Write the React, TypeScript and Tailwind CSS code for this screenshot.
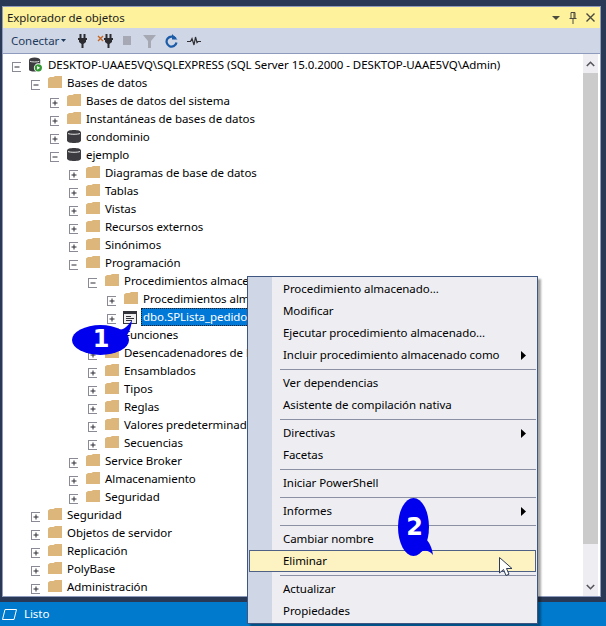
type Kind = "server" | "folder" | "db" | "proc";

type TreeNode = {
  label: string;
  depth: number;
  open?: boolean;
  kind?: Kind;
  selected?: boolean;
};

// labels that run under the context menu stop where the menu starts
const TREE: TreeNode[] = [
  { label: "DESKTOP-UAAE5VQ\\SQLEXPRESS (SQL Server 15.0.2000 - DESKTOP-UAAE5VQ\\Admin)", depth: 0, open: true, kind: "server" },
  { label: "Bases de datos", depth: 1, open: true },
  { label: "Bases de datos del sistema", depth: 2 },
  { label: "Instantáneas de bases de datos", depth: 2 },
  { label: "condominio", depth: 2, kind: "db" },
  { label: "ejemplo", depth: 2, open: true, kind: "db" },
  { label: "Diagramas de base de datos", depth: 3 },
  { label: "Tablas", depth: 3 },
  { label: "Vistas", depth: 3 },
  { label: "Recursos externos", depth: 3 },
  { label: "Sinónimos", depth: 3 },
  { label: "Programación", depth: 3, open: true },
  { label: "Procedimientos almace", depth: 4, open: true },
  { label: "Procedimientos alm", depth: 5 },
  { label: "dbo.SPLista_pedido", depth: 5, kind: "proc", selected: true },
  { label: "Funciones", depth: 4 },
  { label: "Desencadenadores de b", depth: 4 },
  { label: "Ensamblados", depth: 4 },
  { label: "Tipos", depth: 4 },
  { label: "Reglas", depth: 4 },
  { label: "Valores predeterminado", depth: 4 },
  { label: "Secuencias", depth: 4 },
  { label: "Service Broker", depth: 3 },
  { label: "Almacenamiento", depth: 3 },
  { label: "Seguridad", depth: 3 },
  { label: "Seguridad", depth: 1 },
  { label: "Objetos de servidor", depth: 1 },
  { label: "Replicación", depth: 1 },
  { label: "PolyBase", depth: 1 },
  { label: "Administración", depth: 1 },
];

const MENU: { label?: string; sub?: boolean; active?: boolean }[] = [
  { label: "Procedimiento almacenado..." },
  { label: "Modificar" },
  { label: "Ejecutar procedimiento almacenado..." },
  { label: "Incluir procedimiento almacenado como", sub: true },
  {},
  { label: "Ver dependencias" },
  { label: "Asistente de compilación nativa" },
  {},
  { label: "Directivas", sub: true },
  { label: "Facetas" },
  {},
  { label: "Iniciar PowerShell" },
  {},
  { label: "Informes", sub: true },
  {},
  { label: "Cambiar nombre" },
  { label: "Eliminar", active: true },
  {},
  { label: "Actualizar" },
  { label: "Propiedades" },
];

function Expander({ open }: { open?: boolean }) {
  return (
    <svg width="10" height="10" viewBox="0 0 10 10" className="mt-[5px] shrink-0">
      <rect x="1.500" y="0.5" width="9" height="9" fill="#fff" stroke="#8a8a94" />
      <path d={open ? "M3.500 5h5" : "M3.500 5h5M6 2.500v5"} stroke="#2c2c34" fill="none" />
    </svg>
  );
}

function Folder() {
  return (
    <svg width="14" height="12" viewBox="0 0 14 12">
      <path d="M0 2.500 2 1h3.500L7 0h7v12H0z" fill="#dcb67a" />
    </svg>
  );
}

function Cylinder() {
  return (
    <svg width="14" height="13" viewBox="0 0 14 13" className="mt-px">
      <path d="M0 2.500C0 .8 3.200 0 7 0s7 .8 7 2.500v8c0 1.700-3.200 2.500-7 2.500s-7-.8-7-2.500z" fill="#3b3b40" />
      <path d="M1 3.500c1.800 1 10.200 1 12 0" stroke="#e8e8e8" fill="none" />
    </svg>
  );
}

function ServerIcon() {
  return (
    <svg width="15" height="16" viewBox="0 0 15 16" className="mt-px">
      <path d="M0 3C0 1 2.500 0 6 0s6 1 6 3v9.500C12 14.500 9.500 15 6 15s-6-.5-6-2.500z" fill="#3b3b40" />
      <path d="M1 4c1.500 1 8.500 1 10 0" stroke="#e8e8e8" fill="none" />
      <circle cx="10" cy="11" r="4.800" fill="#fff" />
      <circle cx="10" cy="11" r="3.900" fill="#339933" />
      <path d="M8.700 9v4l3.200-2z" fill="#fff" />
    </svg>
  );
}

function ProcIcon() {
  return (
    <svg width="14" height="13" viewBox="0 0 14 13" className="mt-[2px] -ml-px">
      <rect x="0.5" y="0.5" width="13" height="12" fill="#eeeeee" stroke="#33333a" />
      <path d="M0 1h14v2H0z" fill="#33333a" />
      <path d="M3 5.500h5M3 7.500h8M3 9.500h6" stroke="#33333a" fill="none" />
    </svg>
  );
}

function TreeRow({ node }: { node: TreeNode }) {
  const kind = node.kind ?? "folder";
  return (
    <div className="flex h-[18px] items-center whitespace-nowrap" style={{ paddingLeft: 8 + node.depth * 19 }}>
      <Expander open={node.open} />
      <div className="ml-[8px] flex w-[14px] shrink-0 items-center">
        {kind === "folder" && <Folder />}
        {kind === "db" && <Cylinder />}
        {kind === "server" && <ServerIcon />}
        {kind === "proc" && <ProcIcon />}
      </div>
      {node.selected ? (
        <span className="mt-[2px] ml-[3px] h-[18px] w-[108px] border border-dotted border-[#1c1c1c] bg-[#0078d7] px-[1px] leading-[16px] text-white">
          {node.label}
        </span>
      ) : (
        <span className="mt-[2px] ml-[5px]">{node.label}</span>
      )}
    </div>
  );
}

function PlugIcon() {
  return (
    <svg width="9" height="14" viewBox="0 0 9 14">
      <path d="M1.500 0h2v4h-2zM5.500 0h2v4h-2zM0 4h9v2H8v2L5.500 10v4h-2v-4L1 8V6H0z" fill="#2b2b30" />
    </svg>
  );
}

function ToolbarIcons() {
  return (
    <div className="flex items-center">
      <div className="ml-[12px]">
        <PlugIcon />
      </div>
      <svg width="7" height="7" viewBox="0 0 7 7" className="mb-[5px] ml-[10px]">
        <path d="M1 1l5 5M6 1 1 6" stroke="#c8641e" strokeWidth="1.300" fill="none" />
      </svg>
      <div>
        <PlugIcon />
      </div>
      <div className="ml-[10px] h-[9px] w-[8px] bg-[#a6a9b3]" />
      <svg width="13" height="13" viewBox="0 0 13 13" className="mt-[2px] ml-[12px]">
        <path d="M0 0h13L8 6v7H5V6z" fill="#a6a9b3" />
      </svg>
      <svg width="13" height="14" viewBox="0 0 13 14" className="ml-[9px]">
        <path d="M10.500 4.500A5 5 0 1 0 11.500 8.500" stroke="#1c5ba8" strokeWidth="2.200" fill="none" />
        <path d="M7 0v5.500h5.500z" fill="#1c5ba8" />
      </svg>
      <svg width="14" height="10" viewBox="0 0 14 10" className="ml-[9px]">
        <path d="M0 5.500h3.500l1.500-3 2 6.500 1.500-8L10 6.500l1-1h3" stroke="#2f2f35" strokeWidth="1.200" fill="none" />
      </svg>
    </div>
  );
}

function ObjectTree() {
  return (
    <div className="flex min-h-0 flex-1 bg-white pt-px pr-[2px]">
      <div className="min-w-0 flex-1 overflow-hidden">
        {TREE.map((node, i) => (
          <TreeRow key={i} node={node} />
        ))}
      </div>
      <div className="-mt-px flex w-[15px] shrink-0 flex-col bg-[#eeeef2]">
        <div className="flex h-[19px] items-center justify-center">
          <svg width="9" height="6" viewBox="0 0 9 6">
            <path d="M.8 5 4.500 1.300 8.200 5" stroke="#55555c" strokeWidth="1.600" fill="none" />
          </svg>
        </div>
        <div className="h-[471px] bg-[#cbcbcb]" />
        <div className="flex flex-1 items-end justify-center pb-[6px]">
          <svg width="9" height="6" viewBox="0 0 9 6">
            <path d="M.8 1 4.500 4.700 8.200 1" stroke="#55555c" strokeWidth="1.600" fill="none" />
          </svg>
        </div>
      </div>
    </div>
  );
}

function ContextMenu() {
  return (
    <div className="absolute top-[276px] left-[247px] h-[348px] w-[291px] border border-[#3f5680] bg-[#eeeef2] pt-px shadow-[3px_3px_2px_rgba(0,0,0,0.35)]">
      <div className="absolute inset-y-0 left-0 w-[24px] bg-[#cfd6e5]" />
      {MENU.map((item, i) =>
        item.label ? (
          <div
            key={i}
            className={
              item.active
                ? "relative mx-px flex h-[22px] items-center border border-[#4f6286] bg-[#fdf2c1] pl-[33px]"
                : "relative flex h-[22px] items-center justify-between pr-[11px] pl-[35px]"
            }
          >
            <span className="mb-[1px]">{item.label}</span>
            {item.sub && (
              <svg width="5" height="9" viewBox="0 0 5 9">
                <path d="M0 0l5 4.500L0 9z" fill="#000" />
              </svg>
            )}
          </div>
        ) : (
          <div key={i} className="relative mr-px ml-[32px] flex h-[6px] items-center">
            <div className="h-px w-full bg-[#8b90a5]" />
          </div>
        ),
      )}
    </div>
  );
}

function Bubbles() {
  return (
    <>
      <div className="absolute top-[318px] left-[70px] flex h-[40px] w-[64px] items-end">
        <svg width="64" height="40" viewBox="0 0 64 40" className="absolute inset-0">
          <ellipse cx="30.500" cy="22" rx="28.500" ry="15" fill="#0000ee" />
          <path d="M48 12c6 0 10-4 14-10-1 8-3 14-8 18z" fill="#0000ee" />
        </svg>
        <span className="relative mb-[5px] w-[62px] text-center font-['DejaVu_Sans',sans-serif] text-[24px] leading-[28px] font-bold text-white">
          1
        </span>
      </div>
      <div className="absolute top-[498px] left-[398px] h-[58px] w-[36px]">
        <svg width="36" height="58" viewBox="0 0 36 58" className="absolute inset-0">
          <ellipse cx="15.500" cy="29" rx="15.500" ry="29" fill="#0000ee" />
          <path d="M28 41c3 3 6 8 7 16-4-5-8-5-13-3z" fill="#0000ee" />
        </svg>
        <span className="relative mt-[15px] block w-[33px] text-center font-['DejaVu_Sans',sans-serif] text-[24px] leading-[28px] font-bold text-white">
          2
        </span>
      </div>
    </>
  );
}

function Cursor() {
  return (
    <svg width="14" height="20" viewBox="0 0 14 20" className="absolute top-[557px] left-[499px]">
      <path d="M.5.500v15.500l4-3.500 2.500 6 3-1.300-2.500-5.700h5.500z" fill="#fff" stroke="#2c3a55" />
    </svg>
  );
}

export default function App() {
  return (
    <div className="relative flex h-[626px] w-[606px] flex-col overflow-hidden bg-[#293955] pt-[6px] font-['Noto_Sans',sans-serif] text-[11.5px] tracking-[-0.06px] text-black">
      <div className="ml-[2px] flex h-[591px] w-[599px] flex-col border border-[#8e9bbc]">
        <div className="flex h-[21px] items-center justify-between bg-[#fff29d] pr-[5px] pl-[4px] text-[#1c1c1c]">
          <span className="mt-[1px]">Explorador de objetos</span>
          <div className="flex items-center">
            <svg width="8" height="4" viewBox="0 0 8 4">
              <path d="M0 0h8L4 4z" fill="#4a4a3e" />
            </svg>
            <svg width="8" height="12" viewBox="0 0 8 12" className="ml-[9px]">
              <path d="M2 .500h4v6H2zM.5 6.500h7M4 7v5M5 1v5" stroke="#4a4a3e" fill="none" />
            </svg>
            <svg width="9" height="9" viewBox="0 0 9 9" className="ml-[9px]">
              <path d="M.5.500l8 8M8.500.500l-8 8" stroke="#4a4a3e" strokeWidth="1.400" fill="none" />
            </svg>
          </div>
        </div>
        <div className="flex h-[26px] items-center border-b border-[#8e9bbc] bg-[#cfd6e5] pl-[8px] text-[#1e3a5c]">
          <span className="w-[50px]">Conectar</span>
          <svg width="5" height="3" viewBox="0 0 5 3">
            <path d="M0 0h5L2.500 3z" fill="#1e3a5c" />
          </svg>
          <ToolbarIcons />
        </div>
        <ObjectTree />
      </div>
      <div className="mt-[5px] flex h-[24px] items-center bg-[#007acc] pl-[2px] text-white">
        <svg width="15" height="11" viewBox="0 0 15 11">
          <path d="M3 .500h11.500L12 10.500H.5z" stroke="#fff" fill="none" />
        </svg>
        <span className="ml-[7px]">Listo</span>
      </div>
      <ContextMenu />
      <Bubbles />
      <Cursor />
    </div>
  );
}
